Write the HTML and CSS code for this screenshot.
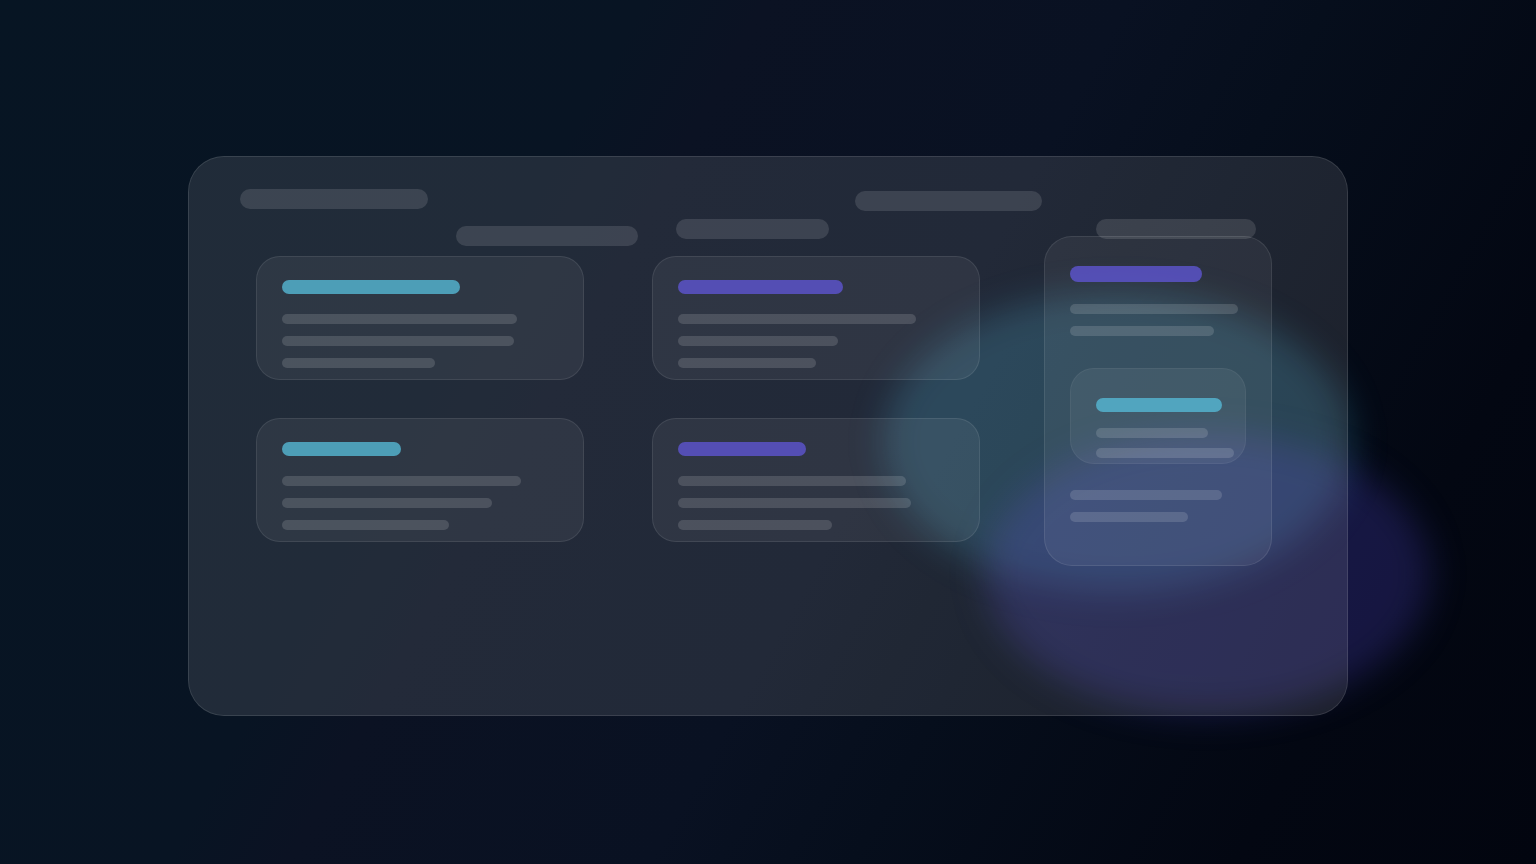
FILE: index.html
```html
<!DOCTYPE html>
<html lang="en">
<head>
    <meta charset="UTF-8">
    <meta name="viewport" content="width=device-width, initial-scale=1.0">
    <title>Glass Dashboard</title>
    <link rel="stylesheet" href="styles.css">
</head>
<body>
    <div class="page">
        <!-- Blurred glows behind the glass -->
        <div class="glow glow-teal"></div>
        <div class="glow glow-purple"></div>

        <main class="panel">
            <div class="chips">
                <div class="chip chip-1"></div>
                <div class="chip chip-2"></div>
                <div class="chip chip-3"></div>
                <div class="chip chip-4"></div>
                <div class="chip chip-5"></div>
            </div>
            <div class="content">
                <div class="cards">
                    <div class="card">
                        <div class="title teal" style="width: 178px"></div>
                        <div class="lines">
                            <div class="line" style="width: 235px"></div>
                            <div class="line" style="width: 232px"></div>
                            <div class="line" style="width: 153px"></div>
                        </div>
                    </div>
                    <div class="card">
                        <div class="title purple" style="width: 165px"></div>
                        <div class="lines">
                            <div class="line" style="width: 238px"></div>
                            <div class="line" style="width: 160px"></div>
                            <div class="line" style="width: 138px"></div>
                        </div>
                    </div>
                    <div class="card">
                        <div class="title teal" style="width: 119px"></div>
                        <div class="lines">
                            <div class="line" style="width: 239px"></div>
                            <div class="line" style="width: 210px"></div>
                            <div class="line" style="width: 167px"></div>
                        </div>
                    </div>
                    <div class="card">
                        <div class="title purple" style="width: 128px"></div>
                        <div class="lines">
                            <div class="line" style="width: 228px"></div>
                            <div class="line" style="width: 233px"></div>
                            <div class="line" style="width: 154px"></div>
                        </div>
                    </div>
                </div>
                <aside class="sidebar">
                    <div class="title title-large purple" style="width: 132px"></div>
                    <div class="lines">
                        <div class="line" style="width: 168px"></div>
                        <div class="line" style="width: 144px"></div>
                    </div>
                    <div class="inset">
                        <div class="title teal" style="width: 126px"></div>
                        <div class="lines">
                            <div class="line" style="width: 112px"></div>
                            <div class="line" style="width: 138px"></div>
                        </div>
                    </div>
                    <div class="lines">
                        <div class="line" style="width: 152px"></div>
                        <div class="line" style="width: 118px"></div>
                    </div>
                </aside>
            </div>
        </main>
    </div>
</body>
</html>
```

FILE: styles.css
```css
:root {
    --teal: rgba(85, 184, 213, 0.8);
    --purple: rgba(94, 85, 209, 0.8);
    --glass: rgba(255, 255, 255, 0.1);
    --glass-light: rgba(255, 255, 255, 0.06);
    --edge: rgba(255, 255, 255, 0.09);
}
* {
    box-sizing: border-box;
}
body {
    margin: 0;
    font-family: Inter, "Liberation Sans", sans-serif;
}
.page {
    position: relative;
    display: flex;
    min-height: 100vh;
    padding: 156px 188px 148px;
    overflow: hidden;
    background: linear-gradient(119deg, #071523 0%, #081423 32%, #0b1223 38%, #091122 56%, #060e1c 66%, #030712 85%, #02050f 100%);
}
.glow {
    position: absolute;
    border-radius: 50%;
    filter: blur(17px);
}
.glow-teal {
    top: 292px;
    right: 184px;
    width: 468px;
    height: 300px;
    background: rgba(60, 158, 197, 0.25);
}
.glow-purple {
    top: 434px;
    right: 106px;
    width: 444px;
    height: 280px;
    background: rgba(66, 59, 176, 0.3);
}
.panel {
    position: relative;
    flex: 1;
    background: var(--glass);
    background-clip: padding-box;
    border: 1px solid rgba(255, 255, 255, 0.2);
    border-radius: 36px;
}
.chips {
    display: flex;
    align-items: flex-start;
    padding-left: 51px;
}
.chip {
    height: 20px;
    border-radius: 10px;
    background: rgba(255, 255, 255, 0.12);
}
.chip-1 {
    width: 188px;
    margin: 32px 28px 0 0;
}
.chip-2 {
    width: 182px;
    margin: 69px 38px 0 0;
}
.chip-3 {
    width: 153px;
    margin: 62px 26px 0 0;
}
.chip-4 {
    width: 187px;
    margin: 34px 54px 0 0;
}
.chip-5 {
    width: 160px;
    margin-top: 62px;
}
.content {
    display: flex;
    align-items: flex-start;
    gap: 64px;
    padding: 10px 75px 0 67px;
}
.cards {
    flex: 1;
    display: grid;
    grid-template-columns: 1fr 1fr;
    gap: 38px 68px;
}
.card,
.sidebar,
.inset {
    background: var(--glass-light);
    border: 1px solid var(--edge);
}
.card {
    padding: 23px 25px 11px;
    border-radius: 24px;
}
.title {
    height: 14px;
    margin-bottom: 20px;
    border-radius: 8px;
}
.title-large {
    height: 16px;
    margin-bottom: 22px;
}
.teal {
    background: var(--teal);
}
.purple {
    background: var(--purple);
}
.lines {
    display: grid;
    gap: 12px;
}
.line {
    height: 10px;
    border-radius: 5px;
    background: rgba(255, 255, 255, 0.14);
}
/* The side card rises over the last chip */
.sidebar {
    width: 228px;
    margin-top: -20px;
    padding: 29px 25px 43px;
    border-radius: 28px;
}
.inset {
    margin: 32px 0 26px;
    padding: 29px 11px 5px 25px;
    border-color: rgba(255, 255, 255, 0.05);
    border-radius: 24px;
}
.inset .title {
    margin-bottom: 16px;
}
.inset .lines {
    gap: 10px;
}
```
